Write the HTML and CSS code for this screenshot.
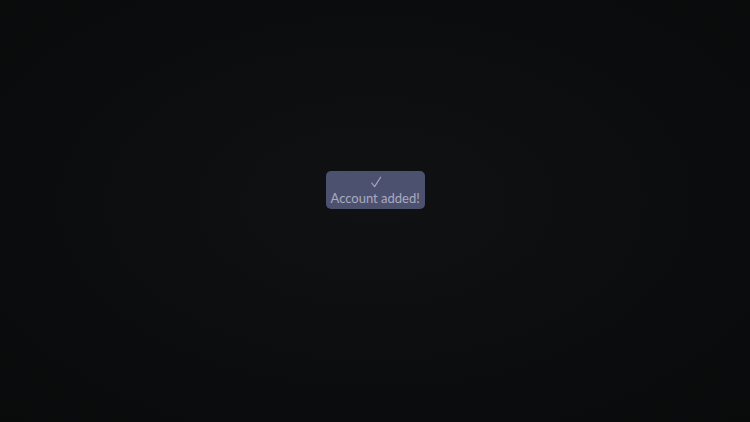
FILE: index.html
```html
<!DOCTYPE html>
<html>
<head>
<meta charset="utf-8">
<link rel="stylesheet" href="styles.css">
</head>
<body>
<main class="screen">
  <div class="toast">
    <div class="toast-icon">
      <svg width="12" height="12" viewBox="0 0 12 12" aria-hidden="true">
        <path d="M1.8 7 L4.6 10.6 L10.6 1.2" fill="none" stroke="#a9abbf" stroke-width="1.1" stroke-linecap="round" stroke-linejoin="round"/>
      </svg>
    </div>
    <div class="toast-text">Account added!</div>
  </div>
</main>
</body>
</html>
```
FILE: styles.css
```css
html, body {
  margin: 0;
  padding: 0;
  height: 100%;
}
body {
  background: radial-gradient(ellipse at 50% 48%, #101113 0%, #0c0d0f 55%, #090a0a 100%);
  font-family: "Lato", "Noto Sans", sans-serif;
}
.screen {
  height: 100%;
  display: flex;
  justify-content: center;
  align-items: flex-start;
  padding-top: 171px;
  box-sizing: border-box;
}
.toast {
  background: #4d5170;
  border-radius: 5px;
  padding: 3px 5px 3px;
  color: #a9abbf;
  text-align: center;
  font-size: 13px;
  font-weight: 400;
  line-height: 16px;
  width: 89px;
  box-sizing: content-box;
}
.toast-icon {
  height: 16px;
  display: flex;
  justify-content: center;
  align-items: center;
}
.toast-icon svg {
  display: block;
  margin-left: 1px;
}
.toast-text {
  white-space: nowrap;
}
```
